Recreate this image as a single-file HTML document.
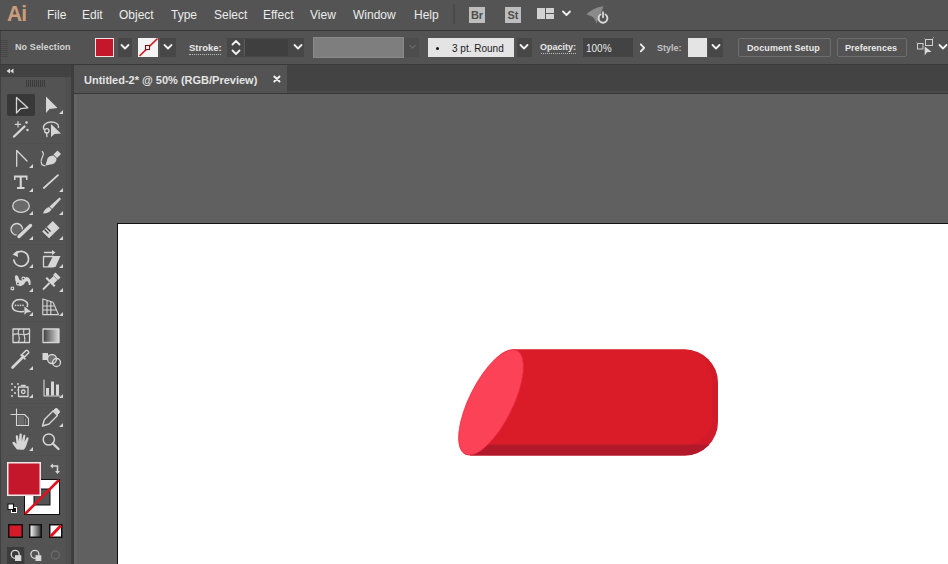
<!DOCTYPE html>
<html><head><meta charset="utf-8">
<style>
*{margin:0;padding:0;box-sizing:border-box}
html,body{width:948px;height:564px;overflow:hidden;background:#535353;font-family:"Liberation Sans",sans-serif;color:#e6e6e6}
.a{position:absolute}
#menubar{left:0;top:0;width:948px;height:30px;background:#545454}
.m{top:8px;font-size:12px;line-height:14px;color:#ececec;white-space:nowrap}
#sep1{left:0;top:30px;width:948px;height:1px;background:#363636}
#ctrl{left:0;top:31px;width:948px;height:33px;background:#535353}
.t{font-size:9px;font-weight:bold;line-height:12px;color:#e8e8e8;white-space:nowrap}
#sep2{left:0;top:64px;width:948px;height:1px;background:#393939}
#tools{left:0;top:65px;width:71px;height:499px;background:#535353}
#tsep{left:71px;top:65px;width:3px;height:499px;background:#3d3d3d}
#tabbar{left:74px;top:65px;width:874px;height:28px;background:#434343;border-bottom:2px solid #4b4b4b}
#tab{left:74px;top:65px;width:213px;height:28px;background:#535353}
#tabsep{left:74px;top:93px;width:874px;height:1px;background:#383838}
#canvas{left:74px;top:94px;width:874px;height:470px;background:#606060}
#artboard{left:117px;top:223px;width:831px;height:341px;background:#fff;border-left:1px solid #111;border-top:1px solid #111}
.dd{background:#474747}
.btn{border:1px solid #6e6e6e;border-radius:2px;background:#535353}
</style></head><body>
<div class="a" id="menubar">
  <div class="a" style="left:7px;top:1.5px;font-size:22px;font-weight:bold;line-height:24px;color:#cc9d7b;letter-spacing:-0.8px;transform:scaleX(0.95);transform-origin:0 0">Ai</div>
  <div class="a m" style="left:47px">File</div>
  <div class="a m" style="left:82px">Edit</div>
  <div class="a m" style="left:119px">Object</div>
  <div class="a m" style="left:171px">Type</div>
  <div class="a m" style="left:214px">Select</div>
  <div class="a m" style="left:263px">Effect</div>
  <div class="a m" style="left:310px">View</div>
  <div class="a m" style="left:353px">Window</div>
  <div class="a m" style="left:414px">Help</div>
  <div class="a" style="left:453px;top:4px;width:2px;height:20px;background:#4a4a4a"></div>
  <div class="a" style="left:469px;top:7px;width:16px;height:16px;background:#bebebe;color:#4e4e4e;font-size:11px;font-weight:bold;line-height:16px;text-align:center">Br</div>
  <div class="a" style="left:505px;top:7px;width:16px;height:16px;background:#bebebe;color:#4e4e4e;font-size:11px;font-weight:bold;line-height:16px;text-align:center">St</div>
</div>
<div class="a" id="sep1"></div>
<div class="a" id="ctrl">
  <div class="a" style="left:0;top:0;width:1px;height:33px;background:#424242"></div>
  <div class="a" style="left:1px;top:9px;width:7px;height:17px;background:repeating-linear-gradient(to bottom,#474747 0,#474747 1px,#535353 1px,#535353 2px)"></div>
  <div class="a t" style="left:15px;top:10px;color:#d4d4d4;letter-spacing:0.1px">No Selection</div>
  <div class="a" style="left:95px;top:7px;width:19px;height:19px;background:#f0e0e0;padding:1px"><div style="width:100%;height:100%;background:#c4172c"></div></div>
  <div class="a dd" style="left:118px;top:7px;width:14px;height:19px"></div>
  <div class="a" style="left:138px;top:7px;width:20px;height:19px;background:#f4f4f4"></div>
  <div class="a dd" style="left:160px;top:7px;width:16px;height:19px"></div>
  <div class="a t" style="left:189px;top:11px;font-size:9.5px">Stroke:</div>
  <div class="a" style="left:189px;top:23px;width:32px;height:0;border-top:1px dotted #bbb"></div>
  <div class="a dd" style="left:227px;top:7px;width:77px;height:19px"></div>
  <div class="a" style="left:244px;top:8px;width:1px;height:17px;background:#5a5a5a"></div>
  <div class="a" style="left:245px;top:8px;width:43px;height:17px;background:#3f3f3f"></div>
  <div class="a" style="left:313px;top:6px;width:91px;height:21px;background:#7e7e7e;border:1px solid #8a8a8a"></div>
  <div class="a dd" style="left:404px;top:7px;width:15px;height:19px;background:#4d4d4d"></div>
  <div class="a" style="left:428px;top:7px;width:86px;height:19px;background:#e4e4e4"></div>
  <div class="a" style="left:436px;top:16px;width:3px;height:3px;border-radius:50%;background:#111"></div>
  <div class="a t" style="left:452px;top:12px;color:#1a1a1a;font-size:10px;font-weight:normal">3 pt. Round</div>
  <div class="a dd" style="left:517px;top:7px;width:15px;height:19px"></div>
  <div class="a t" style="left:540px;top:10px">Opacity:</div>
  <div class="a" style="left:541px;top:22px;width:35px;height:0;border-top:1px dotted #bbb"></div>
  <div class="a" style="left:583px;top:7px;width:50px;height:19px;background:#434343"></div>
  <div class="a t" style="left:586px;top:11.5px;font-size:10px;font-weight:normal">100%</div>
  
  <div class="a t" style="left:657px;top:10.5px;color:#c4c4c4">Style:</div>
  <div class="a" style="left:688px;top:7px;width:19px;height:19px;background:#e4e4e4"></div>
  <div class="a dd" style="left:708px;top:7px;width:15px;height:19px"></div>
  <div class="a btn" style="left:738px;top:7px;width:93px;height:19px"></div>
  <div class="a t" style="left:747px;top:11px;letter-spacing:0.1px">Document Setup</div>
  <div class="a btn" style="left:837px;top:7px;width:70px;height:19px"></div>
  <div class="a t" style="left:845px;top:11px;letter-spacing:0.05px">Preferences</div>
</div>
<div class="a" id="sep2"></div>
<div class="a" id="tools">
  <div class="a" style="left:0;top:0;width:71px;height:12px;background:#424242"></div>
  <div class="a" style="left:7px;top:29px;width:28px;height:22px;background:#383838;border-radius:2px"></div>
  <div class="a" style="left:0;top:0;width:1px;height:499px;background:#404040"></div>
  <div class="a" style="left:65px;top:12px;width:6px;height:487px;background:#4f4f4f"></div>
  <div class="a" style="left:8px;top:78px;width:57px;height:1px;background:#505050"></div>
  <div class="a" style="left:8px;top:179px;width:57px;height:1px;background:#505050"></div>
  <div class="a" style="left:8px;top:256px;width:57px;height:1px;background:#505050"></div>
  <div class="a" style="left:8px;top:338px;width:57px;height:1px;background:#505050"></div>
  <div class="a" style="left:8px;top:390px;width:57px;height:1px;background:#505050"></div>
</div>
<div class="a" id="tsep"></div>
<div class="a" id="tabbar"></div>
<div class="a" id="tab"></div>
<div class="a t" style="left:84px;top:74px;font-size:11px;color:#e4e4e4">Untitled-2* @ 50% (RGB/Preview)</div>
<div class="a" id="tabsep"></div>
<div class="a" id="canvas"></div>
<div class="a" style="left:74px;top:94px;width:3px;height:470px;background:#656565"></div>
<div class="a" id="artboard"></div>
<svg class="a" style="left:0;top:0" width="948" height="564" viewBox="0 0 948 564">
<g fill="none" stroke="#f0f0f0" stroke-width="1.8" stroke-linecap="round" stroke-linejoin="round">
  <!-- menubar chevron -->
  <path d="M563 11.5 L566.5 15 L570 11.5"/>
  <!-- control bar chevrons -->
  <path d="M121.5 45 L125 48.5 L128.5 45"/>
  <path d="M164.5 45 L168 48.5 L171.5 45"/>
  <path d="M294.5 45 L298 48.5 L301.5 45"/>
  <path d="M520.5 45 L524 48.5 L527.5 45"/>
  <path d="M712.5 45 L716 48.5 L719.5 45"/>
  <path d="M939.5 45 L943 48.5 L946.5 45"/>
  <!-- spinner -->
  <path d="M232.5 44.5 L236 41 L239.5 44.5"/>
  <path d="M232.5 50.5 L236 54 L239.5 50.5"/>
  <!-- opacity arrow -->
  <path d="M640.8 44.3 L644.2 47.8 L640.8 51.3"/>
</g>
<path d="M409.5 45 L412.5 48 L415.5 45" fill="none" stroke="#666" stroke-width="1.5"/>
<!-- layout icon -->
<rect x="537" y="8" width="8" height="11" fill="#d2d2d2"/>
<rect x="546" y="8" width="8" height="5" fill="#d2d2d2"/>
<rect x="546" y="14" width="8" height="5" fill="#d2d2d2"/>
<!-- feather/power -->
<path d="M586.5 14.5 C590 11 596 7 603.5 6.3 L601.5 11.5 C600 15 598.5 19 596.5 23.5 C595.5 20 594 17.5 591 16 Z" fill="#8a8a8a"/>
<circle cx="603" cy="18.3" r="4.4" fill="#545454" stroke="#dcdcdc" stroke-width="1.9"/>
<path d="M603 11.5 L603 18" stroke="#545454" stroke-width="3.4"/>
<path d="M603 11.5 L603 18" stroke="#dcdcdc" stroke-width="1.7"/>
<!-- stroke swatch diagonal -->
<path d="M139.5 56 L157.5 38.5" stroke="#d8141e" stroke-width="1.7"/>
<rect x="145.5" y="45.5" width="4" height="4" fill="#f4f4f4" stroke="#701018" stroke-width="1.1"/>
<!-- right-end icon -->
<rect x="917.5" y="43.5" width="5.5" height="5.5" fill="none" stroke="#cfcfcf" stroke-width="1"/>
<rect x="925.5" y="39.5" width="7" height="6" fill="none" stroke="#cfcfcf" stroke-width="1"/>
<path d="M916.5 42.5 L918 44 M932.5 38.5 L934 37 M924.5 38.5 L926 40" stroke="#bbb" stroke-width="0.8"/>
<path d="M924.7 46.4 L924.7 55.4 L927 52.3 L931.6 51.7 Z" fill="#dadada"/>

<!-- tab close -->
<path d="M274.3 76.5 L279.5 81.5 M279.5 76.5 L274.3 81.5" stroke="#f2f2f2" stroke-width="1.9" stroke-linecap="round"/>
<!-- toolbar header -->
<path d="M10 68.5 L6.5 71 L10 73.5 Z M13.5 68.5 L10 71 L13.5 73.5 Z" fill="#d8d8d8"/>
<g stroke="#3a3a3a" stroke-width="1">
<path d="M26.5 80 V87 M28.5 80 V87 M30.5 80 V87 M32.5 80 V87 M34.5 80 V87 M36.5 80 V87 M38.5 80 V87 M40.5 80 V87 M42.5 80 V87 M44.5 80 V87"/>
</g>
<!-- tool icons -->
<g fill="#d6d6d6">
  <!-- flyout triangles -->
  <path d="M63 110 V114 H59 Z M33 164 V168 H29 Z M33 188 V192 H29 Z M63 188 V192 H59 Z M33 211 V215 H29 Z M63 211 V215 H59 Z M33 236 V240 H29 Z M63 236 V240 H59 Z M33 264 V268 H29 Z M63 264 V268 H59 Z M33 288 V292 H29 Z M63 288 V292 H59 Z M33 312 V316 H29 Z M63 312 V316 H59 Z M33 366 V370 H29 Z M33 394 V398 H29 Z M63 394 V398 H59 Z M63 423 V427 H59 Z M33 447 V451 H29 Z"/>
  <!-- direct selection -->
  <path d="M46 96.5 L46 113 L49.5 109 L57.5 108 Z"/>
  <!-- lasso arrow -->
  <path d="M51 124 L51 137 L54.5 134 L61 133.5 Z"/>
  <!-- pen nib -->
  <path d="M45.5 165.5 L47.5 158.5 C48.5 156.5 51 155.5 53.5 155.5 L56.5 158.5 C56.5 161 55.5 163 53 164 Z"/>
  <path d="M53.5 154.5 L57.5 150.5 L61 154 L57 158 Z"/>
  <!-- T -->
  <path d="M14 175.5 H27.5 V180 H26 V177.5 H21.8 V187 H24.5 V189 H17 V187 H19.7 V177.5 H15.5 V180 H14 Z"/>
  <!-- paintbrush -->
  <path d="M59.5 197.5 L61 199 L52 209 L49.5 206.5 Z"/>
  <path d="M49 207 L51.5 209.5 C50 212 47 213.5 43 213.5 C44 210.5 46 208 49 207 Z"/>
  <!-- eraser -->
  <path d="M52.8 221 L59.5 228 L49 238.2 L42.2 231.5 Z"/>
  <path d="M44.5 229.5 L48.5 233.5 M46.5 227.5 L50.5 231.5" stroke="#3a3a3a" stroke-width="1.4"/>
  <!-- pin -->
  <path d="M48.5 281 L53.5 276 L57.5 280 L52.5 285 Z"/>
  <path d="M53 275 L55.5 272.5 L60.5 277.5 L58 280 Z"/>
  <path d="M45.5 278.5 L47 277 L55.5 285.5 L54 287 Z"/>
  <path d="M43 289.5 L49.5 283" stroke="#d6d6d6" stroke-width="1.8"/>
  <!-- scale fill -->
  <path d="M47.5 267 L53 256 H60.5 L55.5 267 Z"/>
  <path d="M52 250 L55.5 252.5 L52 255 Z"/>
  <!-- shape builder arrow -->
  <path d="M24.4 306.5 V314.8 L26.8 312.5 L31.3 312 Z"/>
  <!-- warp body -->
  <path d="M15 277.5 C14.5 275.5 16.5 274.5 17.8 276 C19 277.5 18.5 280.5 21.5 280.5 C24 280.5 24.5 276.5 27.5 277.2 C30.5 278 31 282 30.5 285 L28.8 285 C28.8 282.5 28 281 26.5 281.3 C25 281.7 24.5 285.5 21 286 C17 286.5 15.2 282 15 277.5 Z"/>
  <!-- rotate arrowhead -->
  <path d="M12.5 254.5 L17.5 250.5 L18 257 Z"/>
  <!-- hand -->
  <path d="M17 449.5 C15 447 13.5 445 12.5 443.5 C12 442.3 13.3 441.3 14.5 442 L16.5 444 L15.8 436.5 C15.7 435 17.8 434.8 18 436.3 L18.8 441.5 L19.5 434.5 C19.6 433 21.8 433 21.8 434.5 L21.8 441.5 L23.3 435.5 C23.6 434.2 25.6 434.5 25.3 436 L24.5 442 L26.5 438 C27 436.8 28.8 437.4 28.5 438.7 L26.5 445 C25.8 447.3 24.8 449 23.5 449.8 Z"/>
  <!-- graph bars -->
  <rect x="46" y="388" width="3" height="7.5"/>
  <rect x="51" y="381.5" width="3" height="14"/>
  <rect x="56" y="384.5" width="3" height="11"/>
  <!-- blend square -->
  <rect x="42.5" y="353" width="5.5" height="7"/>
</g>
<g fill="none" stroke="#d6d6d6" stroke-width="1.3" stroke-linejoin="round" stroke-linecap="round">
  <!-- selection -->
  <path d="M16.5 97.5 L16.5 113 L20.5 108.7 L27.8 107.8 Z"/>
  <!-- magic wand -->
  <path d="M14 136.5 L24.5 126.5" stroke-width="2.4"/>
  <path d="M18 121.5 V127 M15.3 124.3 H20.7" stroke-width="1.2"/>
  <circle cx="26.5" cy="122.5" r="1.3" fill="#d6d6d6" stroke="none"/>
  <circle cx="27.5" cy="130" r="1.2" fill="#d6d6d6" stroke="none"/>
  <!-- lasso loop -->
  <path d="M44 129.5 C42 126 45.5 122 51 122 C56 122 59 124 58.5 127.5"/>
  <circle cx="46.8" cy="130.8" r="2.2"/>
  <path d="M46.5 133 L47 136.5" />
  <!-- anchor point tool -->
  <path d="M16.7 166.3 V150.5 L27 161"/>
  <!-- pen curl -->
  <path d="M45 165.8 C40.5 165.5 40.5 161 42 158 C43.5 155 44 152.5 42.2 151.6" stroke-width="1.2"/>
  <!-- line -->
  <path d="M43.8 188 L58 175.2" stroke-width="1.8"/>
  <!-- ellipse -->
  <ellipse cx="21" cy="206" rx="8.3" ry="6.3" fill="#6a6a6a"/>
  <!-- shaper -->
  <circle cx="16.8" cy="229.3" r="5.8" fill="#666"/>
  <path d="M19 236.5 L30.5 225.5" stroke="#535353" stroke-width="5.6"/>
  <path d="M19 236.5 L30.5 225.5" stroke-width="3.4"/>
  <!-- rotate -->
  <path d="M16 253 C18 251.5 20 251.2 21.5 251.3 C25.5 251.5 28.6 254.8 28.6 259 C28.6 263 25.3 266.3 21.2 266.3 C17.5 266.3 14.5 263.5 13.8 260" stroke-width="1.7"/>
  <!-- scale -->
  <rect x="43.5" y="256.5" width="10" height="10.3" />
  <path d="M44.5 252.5 H52.5" stroke-width="1.3"/>
  <!-- warp -->
  <rect x="11.2" y="287.2" width="2.4" height="2.4" stroke-width="1.1"/>
  <circle cx="18" cy="283.4" r="1.5" fill="#535353" stroke-width="1.1"/>
  <circle cx="23.4" cy="278.6" r="1.5" fill="#535353" stroke-width="1.1"/>
  <!-- shape builder -->
  <path d="M23.5 311.5 C20 312 14.5 311.5 12.8 308.5 C11.5 306 12.5 301.5 16.5 300 C20 298.8 25 299.5 27 302.5 C28 304 27.8 305.5 27.3 306.5" stroke-width="1.6"/>
  <path d="M15.5 305.4 H23.5" stroke-dasharray="0.1 2.4" stroke-width="1.6"/>
  <!-- perspective grid -->
  <path d="M42.8 299 V314.6 H58.5 M42.8 299 L53 302.3 M47 300.3 V314.6 M50.8 301.5 V314.6 M42.8 306 H53.5 M42.8 310 H56 M53 302.3 L58.5 314.6" stroke-width="1.1"/>
  <!-- mesh -->
  <rect x="13" y="329" width="16.5" height="13.5"/>
  <path d="M13 335 C18 331 23 338 29.5 333 M19 329 C16 334 22 338 18 342.5 M24 329 C22 334 27 338 24 342.5" stroke-width="1.1"/>
  <!-- gradient -->
  <rect x="43" y="329" width="16" height="13.5" fill="url(#gr)"/>
  <!-- eyedropper -->
  <path d="M13 367 L23 357 M12.5 367.5 L14.5 365.5" stroke-width="2.6"/>
  <path d="M22 354.5 L26 350.5 C27 349.5 29.5 352 28.5 353 L24.5 357 Z M21 355 L25 359" stroke-width="1.6"/>
  <!-- blend circles -->
  <circle cx="52" cy="359" r="4.5" fill="#707070"/>
  <circle cx="56.5" cy="362.5" r="4"/>
  <!-- symbol sprayer -->
  <rect x="18.5" y="387" width="9.5" height="9.5"/>
  <circle cx="23.3" cy="391.8" r="1.8"/>
  <path d="M21.5 385.5 H25" stroke-width="1.6"/>
  <!-- graph axis -->
  <path d="M44 380 V396 H60" stroke-width="1.1"/>
  <!-- artboard -->
  <path d="M11 414.5 H16 M16.5 409 V414" stroke-width="1.1"/>
  <path d="M16.5 414.5 H24.5 L28.5 418.5 V425.5 H16.5 Z" fill="#535353" stroke-width="1.1"/>
  <path d="M19 416 V424.5 M21 416 V424.5 M23 416 V424.5 M25.5 419 V424.5" stroke="#8a8a8a" stroke-width="0.9"/>
  <!-- pencil -->
  <path d="M42.5 426 L44.5 419.5 L53 411 L57.5 415.5 L49 424 Z" stroke-width="1.4"/>
  <path d="M53.5 410.5 L55.5 408.5 C56.5 407.5 60.5 411.5 59.5 412.5 L57.5 414.5 Z" fill="#d6d6d6" stroke-width="1"/>
  <!-- zoom -->
  <circle cx="48.8" cy="439.5" r="5.6" stroke-width="1.5"/>
  <path d="M52.8 443.5 L58.5 449" stroke-width="2.4"/>
</g>
<g fill="#d6d6d6">
  <circle cx="12" cy="396" r="1"/>
  <circle cx="15" cy="393" r="1"/><circle cx="18" cy="390" r="0.8"/>
  <circle cx="12" cy="390" r="1"/><circle cx="15" cy="387" r="1"/><circle cx="12" cy="384" r="0.9"/>
  <circle cx="18" cy="384" r="0.9"/>
</g>
<defs>
  <linearGradient id="gr" x1="0" y1="0" x2="1" y2="0"><stop offset="0" stop-color="#3c3c3c"/><stop offset="1" stop-color="#dcdcdc"/></linearGradient>
  <linearGradient id="gr2" x1="0" y1="0" x2="1" y2="0"><stop offset="0" stop-color="#f4f4f4"/><stop offset="1" stop-color="#3a3a3a"/></linearGradient>
</defs>

<!-- fill / stroke swatches -->
<rect x="24" y="479" width="36" height="36" fill="#111"/>
<rect x="25" y="480" width="34" height="34" fill="#fff"/>
<rect x="34" y="489" width="16" height="16" fill="#535353" stroke="#111" stroke-width="1"/>
<path d="M25 514 L59 480" stroke="#e0101e" stroke-width="2.6"/>
<rect x="7" y="462" width="34" height="34" fill="#f0e8e8"/>
<rect x="8.5" y="463.5" width="31" height="31" fill="#c4172c"/>
<!-- swap arrows -->
<path d="M52 466 H57.5 V471.5" fill="none" stroke="#d6d6d6" stroke-width="1.5"/>
<path d="M50 466 L53 463.5 V468.5 Z M57.5 474 L55 471 H60 Z" fill="#d6d6d6"/>
<!-- default fill/stroke -->
<rect x="11.5" y="507.5" width="5" height="5" fill="#111" stroke="#fff" stroke-width="1"/>
<rect x="8" y="504" width="5.5" height="5.5" fill="#fff" stroke="#111" stroke-width="1"/>
<!-- color mode buttons -->
<rect x="8" y="524" width="15" height="14" fill="#111"/>
<rect x="9.5" y="525.5" width="12" height="11" fill="#d51a2a"/>
<rect x="29" y="524" width="13" height="14" fill="#111"/>
<rect x="30.5" y="525.5" width="10" height="11" fill="url(#gr2)"/>
<rect x="49" y="524" width="13.5" height="14" fill="#111"/>
<rect x="50.5" y="525.5" width="10.5" height="11" fill="#fff"/>
<path d="M50.5 536.5 L61 525.5" stroke="#e8101c" stroke-width="3"/>
<!-- drawing modes -->
<rect x="7" y="547" width="17.3" height="17" fill="#3b3b3b"/>
<g fill="none" stroke="#d8d8d8" stroke-width="1.3">
  <circle cx="15.2" cy="554.3" r="4"/>
  <circle cx="34.9" cy="554.3" r="4"/>
  <circle cx="55.4" cy="555" r="4" stroke="#6a6a6a"/>
</g>
<rect x="15" y="555.2" width="6.3" height="5.8" fill="#d8d8d8"/>
<rect x="35.5" y="555.2" width="5.8" height="5.8" fill="#d8d8d8"/>
</svg>

<svg class="a" style="left:0;top:0" width="948" height="564" viewBox="0 0 948 564">
  <!-- cylinder -->
  <defs><linearGradient id="bb" x1="0" y1="0" x2="0" y2="1"><stop offset="0" stop-color="#c21d2d"/><stop offset="1" stop-color="#b0192a"/></linearGradient></defs>
  <path d="M513 349.5 L685 349.5 A33 33 0 0 1 718 382.5 L718 422 A33.5 33.5 0 0 1 684.5 455.5 L470 455.5 Z" fill="#cf1b2a"/>
  <clipPath id="cb"><rect x="400" y="444.5" width="400" height="20"/></clipPath>
  <path clip-path="url(#cb)" d="M513 349.5 L685 349.5 A33 33 0 0 1 718 382.5 L718 422 A33.5 33.5 0 0 1 684.5 455.5 L470 455.5 Z" fill="url(#bb)"/>
  <path d="M513 349.5 L685 349.5 A27.5 32 0 0 1 712.5 381.5 L712.5 420 A26 24.5 0 0 1 688 444.5 L470 444.5 Z" fill="#da1b28"/>
  <ellipse cx="491" cy="402.3" rx="21.8" ry="58" transform="rotate(26.5 491 402.3)" fill="#fc4257" stroke="#e8283f" stroke-width="0.7"/>
</svg>
</body></html>
